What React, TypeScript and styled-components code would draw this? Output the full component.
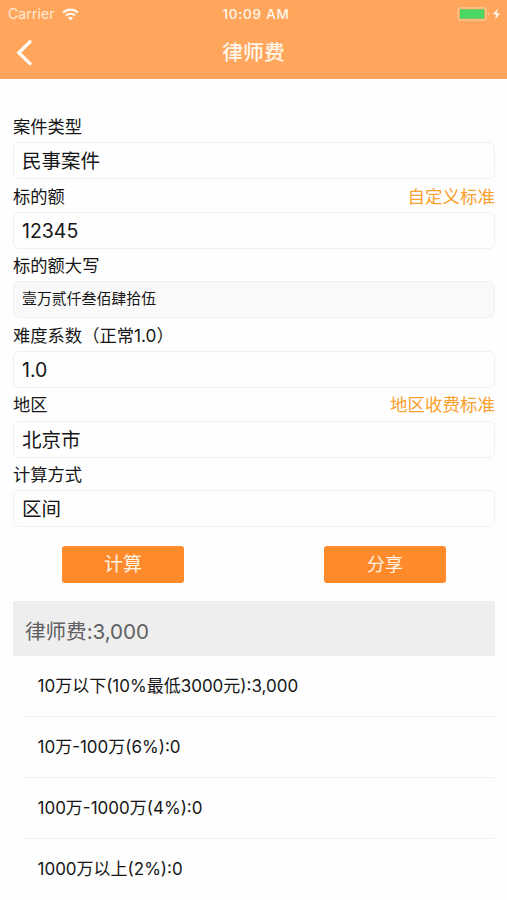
import React from 'react';
import styled, { createGlobalStyle } from 'styled-components';

const GlobalStyle = createGlobalStyle`
  * { box-sizing: border-box; }
  body {
    margin: 0;
    background: #fefefe;
    color: #161616;
    font-family: Inter, 'Noto Sans CJK SC', sans-serif;
    overflow: hidden;
  }
`;

const Screen = styled.div`
  width: 507px;
  height: 900px;
  overflow: hidden;
  background: #fefefe;
`;

const Header = styled.header`
  height: 79.4px;
  background: #ffa65c;
  color: #fff6ec;
`;

const StatusBar = styled.div`
  display: grid;
  grid-template-columns: 1fr auto 1fr;
  align-items: center;
  height: 27px;
  padding: 0 5px 0 8px;
  font-size: 14px;
  line-height: 28px;
`;

const Carrier = styled.div`
  display: flex;
  align-items: center;
  gap: 7px;
  letter-spacing: 0.1px;
  color: #ffecd9;
`;

const Clock = styled.div`
  padding-left: 2px;
  font-size: 13.5px;
  font-weight: 500;
  letter-spacing: 0.75px;
`;

const Power = styled.div`
  display: flex;
  align-items: center;
  justify-content: flex-end;
`;

const NavBar = styled.div`
  display: grid;
  grid-template-columns: 48px 1fr 48px;
  align-items: center;
  height: 52px;
`;

const BackButton = styled.button`
  display: flex;
  align-items: center;
  height: 52px;
  padding: 0 0 0 14px;
  border: 0;
  background: none;
`;

const Title = styled.h1`
  margin: 0;
  text-align: center;
  font-size: 20.8px;
  font-weight: 500;
  line-height: 50px;
`;

const Form = styled.main`
  padding: 30.6px 12px 0 13px;
`;

const Field = styled.div`
  height: 69.6px;
`;

const LabelRow = styled.div`
  display: flex;
  justify-content: space-between;
  height: 32.3px;
  font-size: 17.3px;
  line-height: 33px;
`;

const StandardLink = styled.a`
  color: #fba02c;
  font-size: 17.5px;
`;

const ValueBox = styled.div<{ $readOnly?: boolean }>`
  height: 37px;
  padding-left: 8px;
  border: 1.4px solid #f0f0f0;
  border-radius: 6px;
  background: ${(p) => (p.$readOnly ? '#f9f9f9' : '#fefefe')};
  font-size: ${(p) => (p.$readOnly ? 14.9 : 19.5)}px;
  line-height: ${(p) => (p.$readOnly ? 35 : 36.5)}px;
`;

const Actions = styled.div`
  display: flex;
  justify-content: space-between;
  padding: 18.2px 61px 0 62px;
`;

const ActionButton = styled.button<{ $size: number }>`
  width: 122px;
  height: 37px;
  padding: 0;
  border: 0;
  border-radius: 3px;
  background: #fe8a2b;
  color: #fff3e6;
  font-family: inherit;
  font-size: ${(p) => p.$size}px;
  line-height: 38px;
`;

const Result = styled.section`
  margin: 18px 12px 0 13px;
`;

const Total = styled.div`
  height: 55px;
  padding-left: 12px;
  background: #eee;
  color: #606060;
  font-size: 20.6px;
  letter-spacing: -0.05px;
  line-height: 62px;
`;

const Bracket = styled.div`
  height: 61.2px;
  margin-left: 10px;
  padding-left: 14.5px;
  border-bottom: 1.5px solid #f1f1f1;
  font-size: 17px;
  line-height: 61.5px;
  &:last-child { border-bottom: 0; }
`;

type FieldData = { label: string; value: string; link?: string; readOnly?: boolean };

const fields: FieldData[] = [
  { label: '案件类型', value: '民事案件' },
  { label: '标的额', value: '12345', link: '自定义标准' },
  { label: '标的额大写', value: '壹万贰仟叁佰肆拾伍', readOnly: true },
  { label: '难度系数（正常1.0）', value: '1.0' },
  { label: '地区', value: '北京市', link: '地区收费标准' },
  { label: '计算方式', value: '区间' },
];

const brackets = [
  '10万以下(10%最低3000元):3,000',
  '10万-100万(6%):0',
  '100万-1000万(4%):0',
  '1000万以上(2%):0',
];

const WifiIcon = () => (
  <svg width="17" height="13" viewBox="0 0 17 13" fill="none" stroke="#fff6ec" strokeWidth="2.1">
    <path d="M1 4.7C5.2.6 11.8.6 16 4.7" />
    <path d="M3.8 7.6C6.5 5.1 10.5 5.1 13.2 7.6" />
    <path d="M8.5 12.5 5.8 9.8C7.3 8.5 9.7 8.5 11.2 9.8Z" fill="#fff6ec" stroke="none" />
  </svg>
);

const BatteryIcon = () => (
  <svg width="45" height="14" viewBox="0 0 45 14">
    <rect x="1.2" y=".8" width="28" height="12.4" rx="2.4" fill="none" stroke="#ffc797" strokeWidth="1.3" />
    <rect x="2.8" y="2.3" width="24.6" height="9.4" rx="1" fill="#4cd762" />
    <path d="M31 5q2 2 0 4z" fill="#ffd0a5" />
    <path d="M41 1.5 35.8 7.6h3.4L38 12.6l5.2-6.4h-3.5z" fill="#fff6ec" />
  </svg>
);

const BackIcon = () => (
  <svg width="19" height="28" viewBox="0 0 19 28" fill="none" stroke="#fffaf4" strokeWidth="3.4" strokeLinecap="round" strokeLinejoin="miter">
    <path d="M16 2.8 4.8 13.7 16 24.6" />
  </svg>
);

export default function App() {
  return (
    <Screen>
      <GlobalStyle />
      <Header>
        <StatusBar>
          <Carrier>Carrier<WifiIcon /></Carrier>
          <Clock>10:09 AM</Clock>
          <Power><BatteryIcon /></Power>
        </StatusBar>
        <NavBar>
          <BackButton aria-label="返回"><BackIcon /></BackButton>
          <Title>律师费</Title>
        </NavBar>
      </Header>
      <Form>
        {fields.map((f) => (
          <Field key={f.label}>
            <LabelRow>
              <span>{f.label}</span>
              {f.link && <StandardLink>{f.link}</StandardLink>}
            </LabelRow>
            <ValueBox $readOnly={f.readOnly}>{f.value}</ValueBox>
          </Field>
        ))}
      </Form>
      <Actions>
        <ActionButton $size={19}>计算</ActionButton>
        <ActionButton $size={18}>分享</ActionButton>
      </Actions>
      <Result>
        <Total>律师费:3,000</Total>
        {brackets.map((b) => (
          <Bracket key={b}>{b}</Bracket>
        ))}
      </Result>
    </Screen>
  );
}
